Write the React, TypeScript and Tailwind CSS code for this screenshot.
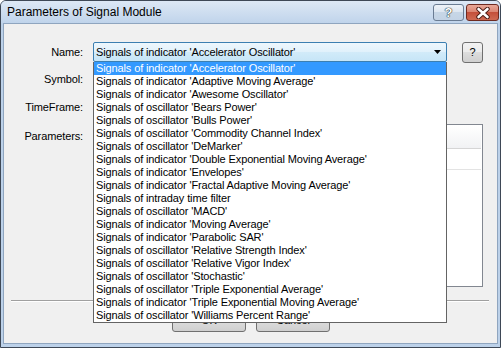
import { useState } from 'react'

const signals = [
  "Signals of indicator 'Accelerator Oscillator'",
  "Signals of indicator 'Adaptive Moving Average'",
  "Signals of indicator 'Awesome Oscillator'",
  "Signals of oscillator 'Bears Power'",
  "Signals of oscillator 'Bulls Power'",
  "Signals of oscillator 'Commodity Channel Index'",
  "Signals of oscillator 'DeMarker'",
  "Signals of indicator 'Double Exponential Moving Average'",
  "Signals of indicator 'Envelopes'",
  "Signals of indicator 'Fractal Adaptive Moving Average'",
  'Signals of intraday time filter',
  "Signals of oscillator 'MACD'",
  "Signals of indicator 'Moving Average'",
  "Signals of indicator 'Parabolic SAR'",
  "Signals of oscillator 'Relative Strength Index'",
  "Signals of oscillator 'Relative Vigor Index'",
  "Signals of oscillator 'Stochastic'",
  "Signals of oscillator 'Triple Exponential Average'",
  "Signals of indicator 'Triple Exponential Moving Average'",
  "Signals of oscillator 'Williams Percent Range'",
]

function TitleButtons() {
  return (
    <div className="flex items-start gap-[2px] mt-[3px]">
      <div className="w-[31px] h-[17px] rounded-[3px] border border-[#6a7c93] bg-[linear-gradient(to_bottom,#eef3f9_0%,#dbe5f0_50%,#c7d6e6_50%,#c3d3e5_100%)] flex items-center justify-center">
        <span className="text-[13px] font-bold leading-none text-white [text-shadow:0_0_1px_#233,0_0_1px_#233,0_0_1px_#233]">?</span>
      </div>
      <div className="w-[33px] h-[17px] rounded-[3px] border border-[#6e2a20] bg-[linear-gradient(to_bottom,#e9a898_0%,#d9826f_50%,#c4503b_50%,#cf6a52_100%)] flex items-center justify-center">
        <svg width="16" height="12" viewBox="0 0 16 12">
          <path d="M3.5 2 L12.5 10 M12.5 2 L3.5 10" stroke="#4a1a12" strokeWidth="4.4" strokeLinecap="round" />
          <path d="M3.5 2 L12.5 10 M12.5 2 L3.5 10" stroke="#ffffff" strokeWidth="2.6" strokeLinecap="round" />
        </svg>
      </div>
    </div>
  )
}

function SignalCombo() {
  const [open] = useState(true)
  const [selected] = useState(0)

  return (
    <div className="relative w-[354px] h-[20px]">
      <div className="h-full rounded-[2px] border border-[#3c7fb1] bg-[linear-gradient(to_bottom,#eef7fd_0%,#e0f1fb_50%,#d2ebf9_50%,#c6e5f7_100%)] flex items-center pl-[2px] pr-[5px]">
        <span className="flex-1 truncate">{signals[selected]}</span>
        <svg width="7" height="4" viewBox="0 0 7 4">
          <path d="M0 0 H7 L3.5 4 Z" fill="#000" />
        </svg>
      </div>
      {open && (
        <div className="absolute left-0 top-[20px] w-[354px] bg-white border border-t-0 border-[#646464] z-10">
          {signals.map((s, i) => (
            <div
              key={s}
              className={`h-[13px] leading-[13px] pl-[2px] whitespace-nowrap ${i === selected ? 'bg-[#3399ff] text-white' : 'text-black'}`}
            >
              {s}
            </div>
          ))}
        </div>
      )}
    </div>
  )
}

function DlgButton({ label }: { label: string }) {
  return (
    <button
      type="button"
      className="w-[74px] h-[23px] rounded-[3px] border border-[#707070] bg-[linear-gradient(to_bottom,#f2f2f2_0%,#ebebeb_50%,#dddddd_50%,#cfcfcf_100%)] text-black"
    >
      {label}
    </button>
  )
}

export default function App() {
  return (
    <div className="w-[501px] h-[348px] flex flex-col border border-[#3e4856] rounded-t-[6px] overflow-hidden bg-[#bcd1e9] font-['Liberation_Sans',Arial,sans-serif] text-[11px] tracking-[-0.12px] text-black">
      <div className="h-[22px] flex items-start justify-between pl-[6px] pr-[1px] bg-[linear-gradient(to_bottom,#dde8f5,#c0d4eb)]">
        <span className="mt-[4px] text-[12px] leading-[15px] tracking-normal text-black">
          Parameters of Signal Module
        </span>
        <TitleButtons />
      </div>

      <div className="flex-1 mx-[2px] mb-[3px] border border-[#8fa5bf] bg-[#f0f0f0] flex flex-col">
        <div className="flex items-center mt-[18px] h-[20px]">
          <div className="w-[79px] text-right">Name:</div>
          <div className="ml-[10px]">
            <SignalCombo />
          </div>
          <button
            type="button"
            className="ml-[15px] w-[21px] h-[21px] rounded-[3px] border border-[#707070] bg-[linear-gradient(to_bottom,#f2f2f2_0%,#ebebeb_50%,#dddddd_50%,#cfcfcf_100%)] flex items-center justify-center"
          >
            ?
          </button>
        </div>

        <div className="flex items-center mt-[7px] h-[20px]">
          <div className="w-[79px] text-right">Symbol:</div>
        </div>

        <div className="flex items-center mt-[8px] h-[20px]">
          <div className="w-[79px] text-right">TimeFrame:</div>
        </div>

        <div className="flex items-start mt-[7px]">
          <div className="w-[79px] text-right mt-[4px]">Parameters:</div>
          <div className="ml-[10px] w-[390px] h-[163px] border border-[#828790] bg-white p-[1px]">
            <div className="h-[23px] bg-[linear-gradient(to_bottom,#ffffff,#f1f2f4)] border-b border-[#d5d5d5]" />
            <div className="h-[21px] border-b border-[#e3e3e3]" />
          </div>
        </div>

        <div className="mt-[13px] ml-[7px] w-[478px] border-t border-[#a0a0a0] border-b border-b-white" />

        <div className="flex gap-[10px] ml-[168px] mt-[7px]">
          <DlgButton label="OK" />
          <DlgButton label="Cancel" />
        </div>
      </div>
    </div>
  )
}
